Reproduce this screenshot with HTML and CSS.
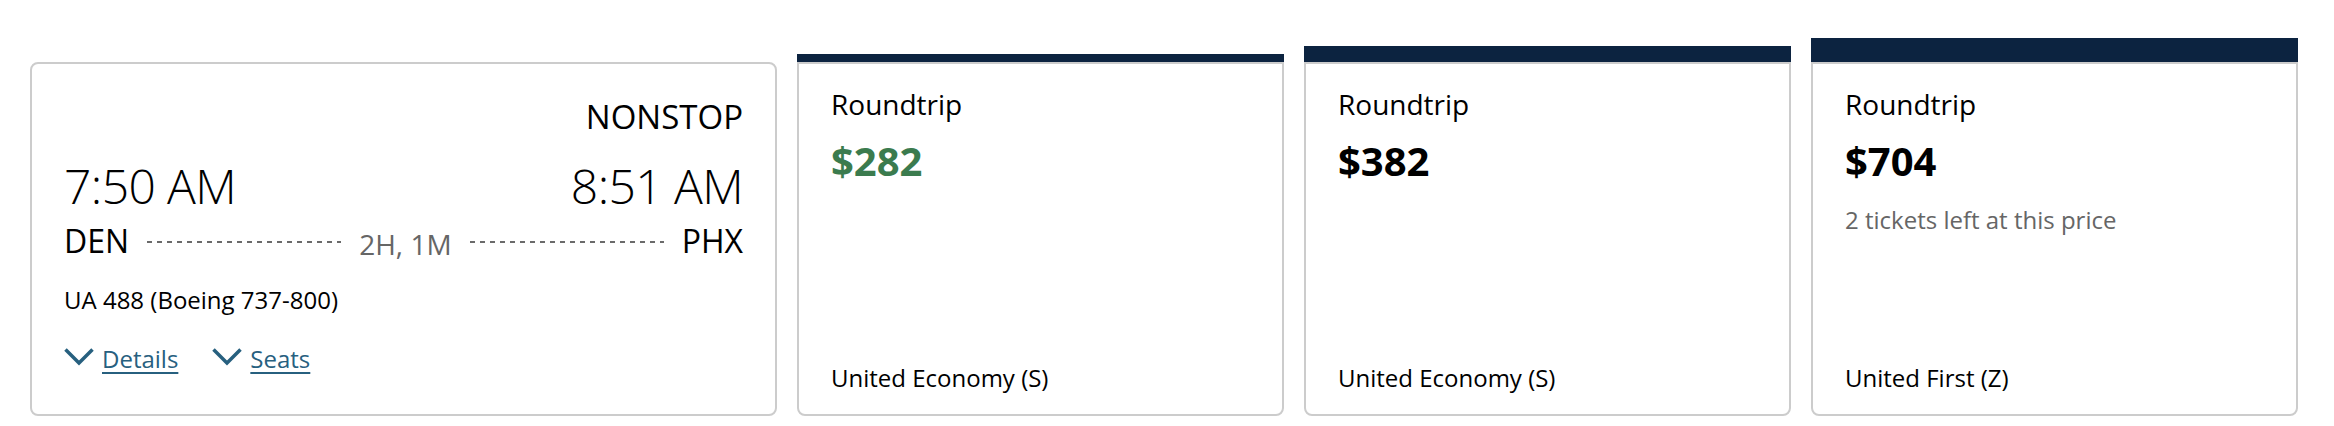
FILE: index.html
```html
<!DOCTYPE html>
<html lang="en">
<head>
<meta charset="utf-8">
<title>Flight fares</title>
<link rel="stylesheet" href="styles.css">
</head>
<body>
<div class="row">
  <div class="flight">
    <div class="nonstop">NONSTOP</div>
    <div class="times"><span>7:50 AM</span><span>8:51 AM</span></div>
    <div class="route">
      <span class="code">DEN</span>
      <span class="dash"></span>
      <span class="dur">2H, 1M</span>
      <span class="dash"></span>
      <span class="code">PHX</span>
    </div>
    <div class="equip">UA 488 (Boeing 737-800)</div>
    <div class="links">
      <a class="link" href="#"><svg class="chev" viewBox="0 0 30 18" width="30" height="18"><path d="M1.5 1.5 L15 15 L28.5 1.5" /></svg><span class="lt">Details</span></a>
      <a class="link" href="#"><svg class="chev" viewBox="0 0 30 18" width="30" height="18"><path d="M1.5 1.5 L15 15 L28.5 1.5" /></svg><span class="lt">Seats</span></a>
    </div>
  </div>

  <div class="fare">
    <div class="bar bar-s"></div>
    <div class="fare-body">
      <div class="trip">Roundtrip</div>
      <div class="price price-low">$282</div>
      <div class="cabin">United Economy (S)</div>
    </div>
  </div>

  <div class="fare">
    <div class="bar bar-m"></div>
    <div class="fare-body">
      <div class="trip">Roundtrip</div>
      <div class="price">$382</div>
      <div class="cabin">United Economy (S)</div>
    </div>
  </div>

  <div class="fare">
    <div class="bar bar-l"></div>
    <div class="fare-body">
      <div class="trip">Roundtrip</div>
      <div class="price">$704</div>
      <div class="left">2 tickets left at this price</div>
      <div class="cabin">United First (Z)</div>
    </div>
  </div>
</div>
</body>
</html>
```
FILE: styles.css
```css
* { box-sizing: border-box; }
html, body {
  margin: 0;
  padding: 0;
  background: #fff;
}
body {
  font-family: "Open Sans", "Noto Sans", sans-serif;
  color: #000;
}
.row {
  display: flex;
  align-items: flex-end;
  gap: 20px;
  padding: 38px 0 0 30px;
}
.flight {
  width: 747px;
  height: 354px;
  border: 2px solid #cccccc;
  border-radius: 8px;
  padding: 33px 32px 0 32px;
  display: flex;
  flex-direction: column;
}
.nonstop {
  font-size: 33px;
  line-height: 40px;
  text-align: right;
}
.times {
  display: flex;
  justify-content: space-between;
  font-size: 48px;
  line-height: 56px;
  font-weight: 300;
  letter-spacing: -0.6px;
  margin-top: 21px;
}
.route {
  display: flex;
  align-items: center;
  margin-top: 7px;
  height: 40px;
}
.code {
  font-size: 32px;
  line-height: 40px;
}
.dash {
  flex: 1;
  height: 2px;
  margin: 0 18px;
  background: repeating-linear-gradient(to right, #6a6a6a 0 5px, transparent 5px 10px);
  position: relative;
  top: 1px;
}
.dur {
  font-size: 28px;
  line-height: 40px;
  color: #666666;
  position: relative;
  top: 3px;
}
.equip {
  font-size: 24px;
  line-height: 32px;
  margin-top: 23px;
}
.links {
  display: flex;
  gap: 34px;
  margin-top: 27px;
}
.link {
  display: flex;
  align-items: center;
  gap: 8px;
  color: #27607f;
  text-decoration: none;
  font-size: 24px;
  line-height: 32px;
}
.lt {
  text-decoration: underline;
  text-decoration-thickness: 2px;
  text-underline-offset: 4px;
}
.chev {
  display: block;
  position: relative;
  top: -2px;
}
.chev path {
  fill: none;
  stroke: #27607f;
  stroke-width: 3.5;
}
.fare {
  width: 487px;
  display: flex;
  flex-direction: column;
}
.bar {
  background: #0c2340;
}
.bar-s { height: 8px; }
.bar-m { height: 16px; }
.bar-l { height: 24px; }
.fare-body {
  height: 354px;
  border: 2px solid #cccccc;
  border-radius: 0 0 8px 8px;
  padding: 22px 32px 20px 32px;
  display: flex;
  flex-direction: column;
}
.trip {
  font-size: 28px;
  line-height: 36px;
}
.price {
  font-size: 40px;
  line-height: 52px;
  font-weight: 700;
  margin-top: 13px;
}
.price-low { color: #3b7b4e; }
.left {
  font-size: 24px;
  line-height: 32px;
  color: #666666;
  margin-top: 17px;
}
.cabin {
  font-size: 24px;
  line-height: 32px;
  margin-top: auto;
}
```
